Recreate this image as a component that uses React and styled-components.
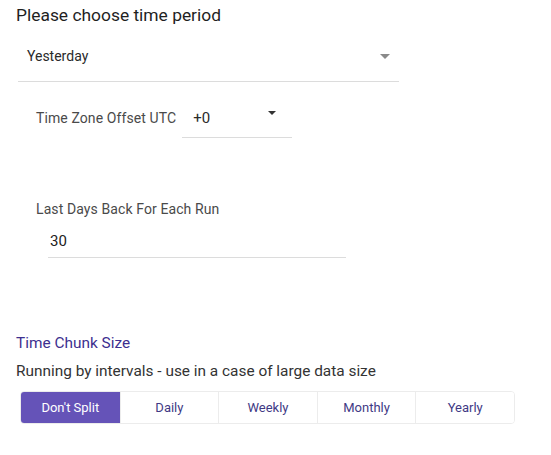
import React, { useState } from 'react';
import styled, { createGlobalStyle } from 'styled-components';

const GlobalStyle = createGlobalStyle`
  body {
    margin: 0;
    background: #ffffff;
    font-family: Roboto, "Liberation Sans", Arial, sans-serif;
  }
`;

const Page = styled.div`
  padding: 5px 16px 0 16px;
  width: 551px;
  box-sizing: border-box;
`;

const Title = styled.h2`
  margin: 0;
  font-size: 17.4px;
  line-height: 20px;
  font-weight: 400;
  color: #1f1f1f;
`;

const SelectBox = styled.div`
  display: flex;
  align-items: center;
  justify-content: space-between;
  border-bottom: 1px solid #dcdcdc;
  box-sizing: border-box;
  width: ${p => p.$width}px;
  height: ${p => p.$height}px;
  margin-left: ${p => p.$indent || 0}px;
  padding: ${p => p.$padTop || 0}px ${p => p.$padRight || 0}px 0 ${p => p.$padLeft || 0}px;
`;

const SelectValue = styled.span`
  font-size: ${p => p.$size || 14}px;
  color: #2a2a2a;
`;

const Caret = styled.span`
  width: 0;
  height: 0;
  border-left: ${p => p.$w || 5}px solid transparent;
  border-right: ${p => p.$w || 5}px solid transparent;
  border-top: ${p => p.$h || 5}px solid ${p => p.$color || '#777'};
  margin-top: ${p => p.$shift || 0}px;
`;

const Indented = styled.div`
  padding-left: 20px;
`;

const Row = styled.div`
  display: flex;
  align-items: center;
  margin-top: 15px;
`;

const FieldLabel = styled.span`
  font-size: 14px;
  color: #4a4a4a;
  margin-right: 6px;
  letter-spacing: 0.1px;
`;

const LabelLine = styled.div`
  margin-top: 61px;
`;

const InputWrap = styled.div`
  margin-left: 12px;
  width: 298px;
  box-sizing: border-box;
  border-bottom: 1px solid #dcdcdc;
  padding: 13px 0 7px 2px;
`;

const InputValue = styled.span`
  font-size: 15px;
  color: #222;
`;

const Section = styled.div`
  margin-top: 75px;
`;

const SectionTitle = styled.div`
  font-size: 15.4px;
  color: #3d2f8f;
  line-height: 20px;
`;

const Hint = styled.div`
  font-size: 15.4px;
  color: #333;
  line-height: 20px;
  margin-top: 8px;
`;

const Group = styled.div`
  display: grid;
  grid-template-columns: repeat(5, 1fr);
  width: 495px;
  box-sizing: border-box;
  margin: 10px 0 0 4px;
  border: 1px solid #ececec;
  border-radius: 4px;
  overflow: hidden;
`;

const SegButton = styled.button`
  height: 31px;
  border: none;
  border-left: ${p => (p.$first ? 'none' : '1px solid #ececec')};
  background: ${p => (p.$active ? '#6553b8' : '#ffffff')};
  color: ${p => (p.$active ? '#ffffff' : '#3f3a85')};
  font-family: Roboto, "Liberation Sans", Arial, sans-serif;
  font-size: 13px;
  padding: 0;
  cursor: pointer;
`;

const options = ["Don't Split", 'Daily', 'Weekly', 'Monthly', 'Yearly'];

export default function App() {
  const [active, setActive] = useState(0);
  return (
    <Page>
      <GlobalStyle />
      <Title>Please choose time period</Title>
      <SelectBox $width={381} $height={57} $indent={2} $padLeft={9} $padRight={9} $padTop={6}>
        <SelectValue>Yesterday</SelectValue>
        <Caret $color="#8a8a8a" />
      </SelectBox>

      <Indented>
        <Row>
          <FieldLabel>Time Zone Offset UTC</FieldLabel>
          <SelectBox $width={110} $height={41} $padLeft={11} $padRight={16} $padTop={1}>
            <SelectValue $size={15}>+0</SelectValue>
            <Caret $color="#333" $w={4} $h={4} $shift={-10} />
          </SelectBox>
        </Row>

        <LabelLine>
          <FieldLabel>Last Days Back For Each Run</FieldLabel>
        </LabelLine>
        <InputWrap>
          <InputValue>30</InputValue>
        </InputWrap>
      </Indented>

      <Section>
        <SectionTitle>Time Chunk Size</SectionTitle>
        <Hint>Running by intervals - use in a case of large data size</Hint>
        <Group>
          {options.map((o, i) => (
            <SegButton key={o} $first={i === 0} $active={i === active} onClick={() => setActive(i)}>
              {o}
            </SegButton>
          ))}
        </Group>
      </Section>
    </Page>
  );
}
